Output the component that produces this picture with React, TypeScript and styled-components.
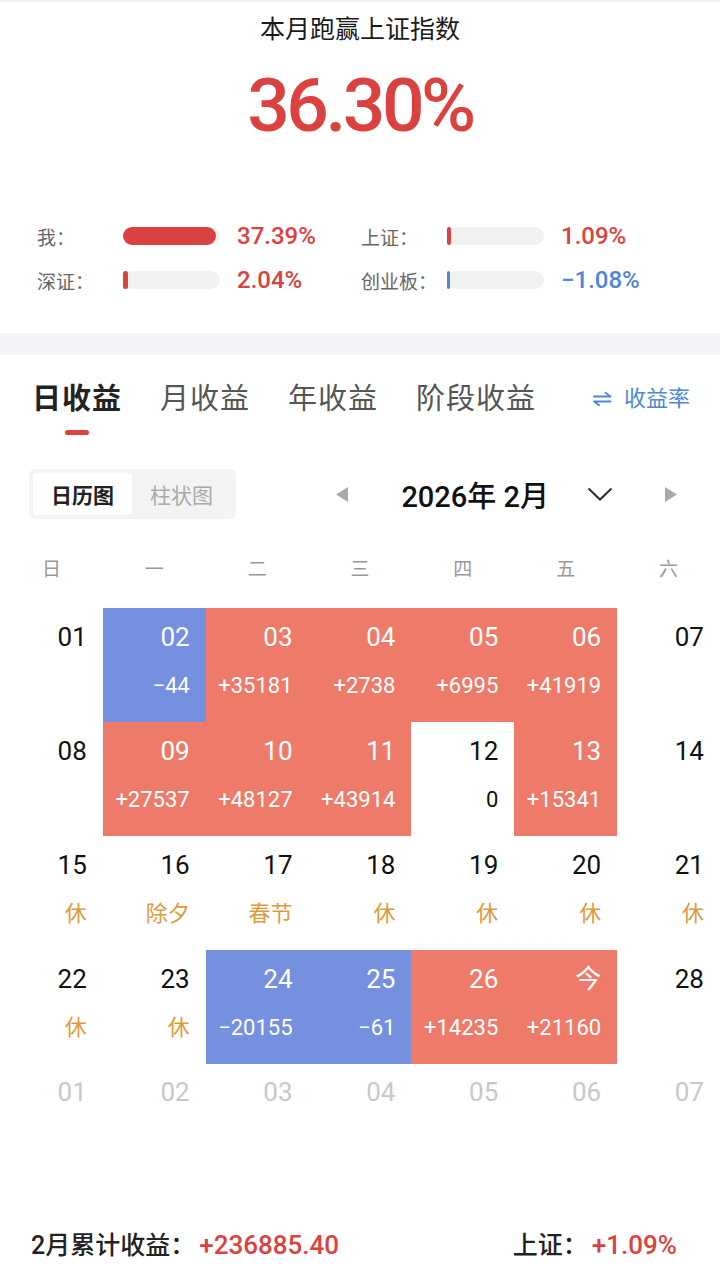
import styled, { createGlobalStyle } from "styled-components";

const GlobalStyle = createGlobalStyle`
  body {
    margin: 0;
    background: #ffffff;
    font-family: Roboto, "Noto Sans CJK SC", sans-serif;
  }
`;

type Tone = "up" | "down" | "none";

interface DayCell {
  day: string;
  value?: string;
  tone?: Tone;
  holiday?: boolean;
}

const weeks: DayCell[][] = [
  [
    { day: "01" },
    { day: "02", value: "−44", tone: "down" },
    { day: "03", value: "+35181", tone: "up" },
    { day: "04", value: "+2738", tone: "up" },
    { day: "05", value: "+6995", tone: "up" },
    { day: "06", value: "+41919", tone: "up" },
    { day: "07" },
  ],
  [
    { day: "08" },
    { day: "09", value: "+27537", tone: "up" },
    { day: "10", value: "+48127", tone: "up" },
    { day: "11", value: "+43914", tone: "up" },
    { day: "12", value: "0" },
    { day: "13", value: "+15341", tone: "up" },
    { day: "14" },
  ],
  [
    { day: "15", value: "休", holiday: true },
    { day: "16", value: "除夕", holiday: true },
    { day: "17", value: "春节", holiday: true },
    { day: "18", value: "休", holiday: true },
    { day: "19", value: "休", holiday: true },
    { day: "20", value: "休", holiday: true },
    { day: "21", value: "休", holiday: true },
  ],
  [
    { day: "22", value: "休", holiday: true },
    { day: "23", value: "休", holiday: true },
    { day: "24", value: "−20155", tone: "down" },
    { day: "25", value: "−61", tone: "down" },
    { day: "26", value: "+14235", tone: "up" },
    { day: "今", value: "+21160", tone: "up" },
    { day: "28" },
  ],
];

const nextMonth = ["01", "02", "03", "04", "05", "06", "07"];
const weekdays = ["日", "一", "二", "三", "四", "五", "六"];

// fill is in px of a 97px track
const stats = [
  { label: "我：", value: "37.39%", fill: 93, color: "#d9423e" },
  { label: "上证：", value: "1.09%", fill: 4, color: "#d9423e" },
  { label: "深证：", value: "2.04%", fill: 5, color: "#d9423e" },
  { label: "创业板：", value: "−1.08%", fill: 3, color: "#4f86d8" },
];

function App() {
  return (
    <Page>
      <GlobalStyle />
      <Header>
        <Title>本月跑赢上证指数</Title>
        <BigNumber>36.30%</BigNumber>
        <StatsGrid>
          {stats.map((s) => (
            <StatRow key={s.label}>
              <StatLabel>{s.label}</StatLabel>
              <Bar>
                <BarFill $color={s.color} style={{ width: s.fill }} />
              </Bar>
              <StatValue $color={s.color}>{s.value}</StatValue>
            </StatRow>
          ))}
        </StatsGrid>
      </Header>
      <Band />
      <Tabs>
        <Tab $active>
          日收益
          <Underline />
        </Tab>
        <Tab>月收益</Tab>
        <Tab>年收益</Tab>
        <Tab>阶段收益</Tab>
        <RateLink>
          <svg width="19" height="14" viewBox="0 0 19 14">
            <path
              d="M1 4.5 H17.5 L12.5 0.8 M17.5 9.5 H1 L6 13.2"
              fill="none"
              stroke="#4f86d8"
              strokeWidth="1.8"
              strokeLinecap="round"
              strokeLinejoin="round"
            />
          </svg>
          收益率
        </RateLink>
      </Tabs>
      <Controls>
        <Segmented>
          <Segment $active>日历图</Segment>
          <Segment>柱状图</Segment>
        </Segmented>
        <MonthNav>
          <svg width="12" height="15" viewBox="0 0 12 15">
            <polygon points="12,0 12,15 0,7.5" fill="#aaaaaa" />
          </svg>
          <MonthText>2026年 2月</MonthText>
          <svg width="26" height="14" viewBox="0 0 26 14">
            <polyline
              points="1.5,1.5 13,12.5 24.5,1.5"
              fill="none"
              stroke="#333333"
              strokeWidth="2.2"
            />
          </svg>
          <svg width="12" height="15" viewBox="0 0 12 15">
            <polygon points="0,0 12,7.5 0,15" fill="#aaaaaa" />
          </svg>
        </MonthNav>
      </Controls>
      <WeekHeader>
        {weekdays.map((w) => (
          <WeekDay key={w}>{w}</WeekDay>
        ))}
      </WeekHeader>
      <Calendar>
        {weeks.flat().map((c, i) => (
          <Cell key={i} $tone={c.tone ?? "none"}>
            <DayNum>{c.day}</DayNum>
            {c.value && (
              <CellValue $holiday={c.holiday}>{c.value}</CellValue>
            )}
          </Cell>
        ))}
        {nextMonth.map((d) => (
          <NextCell key={"n" + d}>{d}</NextCell>
        ))}
      </Calendar>
      <Footer>
        <FooterItem>
          2月累计收益：<FooterValue>+236885.40</FooterValue>
        </FooterItem>
        <FooterItem>
          上证：<FooterValue>+1.09%</FooterValue>
        </FooterItem>
      </Footer>
    </Page>
  );
}

export default App;

const Page = styled.div`
  width: 720px;
  min-height: 1278px;
  border-top: 2px solid #f2f2f2;
  box-sizing: border-box;
`;

const Header = styled.div`
  display: flex;
  flex-direction: column;
  align-items: center;
  padding: 12px 0 31px;
`;

const Title = styled.div`
  font-size: 25px;
  line-height: 32px;
  color: #1a1a1a;
`;

const BigNumber = styled.div`
  margin-top: 19px;
  font-family: Roboto, sans-serif;
  font-size: 75px;
  font-weight: 500;
  line-height: 80px;
  letter-spacing: -3.5px;
  color: #d9423e;
`;

const StatsGrid = styled.div`
  align-self: stretch;
  display: grid;
  grid-template-columns: 324px 324px;
  padding-left: 37px;
  margin-top: 69px;
`;

const StatRow = styled.div`
  display: flex;
  align-items: center;
  height: 44px;
`;

const StatLabel = styled.div`
  width: 86px;
  font-size: 19px;
  color: #666666;
`;

const Bar = styled.div`
  width: 97px;
  height: 18px;
  border-radius: 9px;
  background: #f1f1f1;
  margin-right: 17px;
`;

const BarFill = styled.div<{ $color: string }>`
  height: 100%;
  border-radius: 9px;
  background: ${(p) => p.$color};
`;

const StatValue = styled.div<{ $color: string }>`
  font-size: 24px;
  font-weight: 500;
  color: ${(p) => p.$color};
`;

const Band = styled.div`
  height: 22px;
  background: #f3f4f7;
`;

const Tabs = styled.div`
  display: flex;
  align-items: flex-start;
  gap: 38px;
  padding: 24px 30px 0 32px;
`;

const Tab = styled.div<{ $active?: boolean }>`
  display: flex;
  flex-direction: column;
  align-items: center;
  font-size: 29px;
  letter-spacing: 1px;
  line-height: 40px;
  font-weight: ${(p) => (p.$active ? 700 : 400)};
  color: ${(p) => (p.$active ? "#222222" : "#555555")};
`;

const Underline = styled.div`
  width: 24px;
  height: 5px;
  border-radius: 3px;
  background: #d9423e;
  margin-top: 11px;
`;

const RateLink = styled.div`
  margin-left: auto;
  display: flex;
  align-items: center;
  gap: 12px;
  font-size: 22px;
  line-height: 40px;
  color: #4f86d8;
`;

const Controls = styled.div`
  display: flex;
  align-items: center;
  padding: 34px 43px 0 29px;
`;

const Segmented = styled.div`
  display: flex;
  width: 207px;
  height: 50px;
  padding: 4px;
  box-sizing: border-box;
  border-radius: 6px;
  background: #f3f3f3;
`;

const Segment = styled.div<{ $active?: boolean }>`
  width: 99px;
  display: flex;
  align-items: center;
  justify-content: center;
  font-size: 21px;
  border-radius: 4px;
  font-weight: ${(p) => (p.$active ? 700 : 400)};
  color: ${(p) => (p.$active ? "#222222" : "#aaaaaa")};
  background: ${(p) => (p.$active ? "#ffffff" : "transparent")};
`;

const MonthNav = styled.div`
  margin-left: auto;
  display: flex;
  align-items: center;

  & > svg:first-child {
    margin-right: 53px;
  }
  & > svg:last-child {
    margin-left: 52px;
  }
`;

const MonthText = styled.div`
  font-size: 29px;
  font-weight: 500;
  color: #111111;
  margin-right: 38px;
`;

const WeekHeader = styled.div`
  display: grid;
  grid-template-columns: repeat(7, 1fr);
  height: 54px;
  margin-top: 21px;
  align-items: center;
`;

const WeekDay = styled.div`
  text-align: center;
  font-size: 19px;
  color: #999999;
`;

const Calendar = styled.div`
  display: grid;
  grid-template-columns: repeat(7, 1fr);
  margin-top: 14px;
`;

const toneBg: Record<Tone, string> = {
  up: "#ee7b69",
  down: "#7490de",
  none: "transparent",
};

const Cell = styled.div<{ $tone: Tone }>`
  height: 114px;
  box-sizing: border-box;
  padding: 14px 16px 0 0;
  display: flex;
  flex-direction: column;
  align-items: flex-end;
  background: ${(p) => toneBg[p.$tone]};
  color: ${(p) => (p.$tone === "none" ? "#111111" : "#ffffff")};
`;

const DayNum = styled.div`
  font-size: 26px;
  line-height: 30px;
`;

const CellValue = styled.div<{ $holiday?: boolean }>`
  margin-top: 20px;
  font-size: 22px;
  line-height: 28px;
  color: ${(p) => (p.$holiday ? "#dd9a3c" : "inherit")};
`;

const NextCell = styled.div`
  height: 56px;
  box-sizing: border-box;
  padding: 13px 16px 0 0;
  text-align: right;
  font-size: 26px;
  line-height: 30px;
  color: #c8c8c8;
`;

const Footer = styled.div`
  display: flex;
  justify-content: space-between;
  padding: 109px 43px 0 31px;
`;

const FooterItem = styled.div`
  font-size: 25px;
  line-height: 32px;
  font-weight: 500;
  color: #222222;
`;

const FooterValue = styled.span`
  margin-left: 4px;
  font-size: 26px;
  color: #d9423e;
`;
